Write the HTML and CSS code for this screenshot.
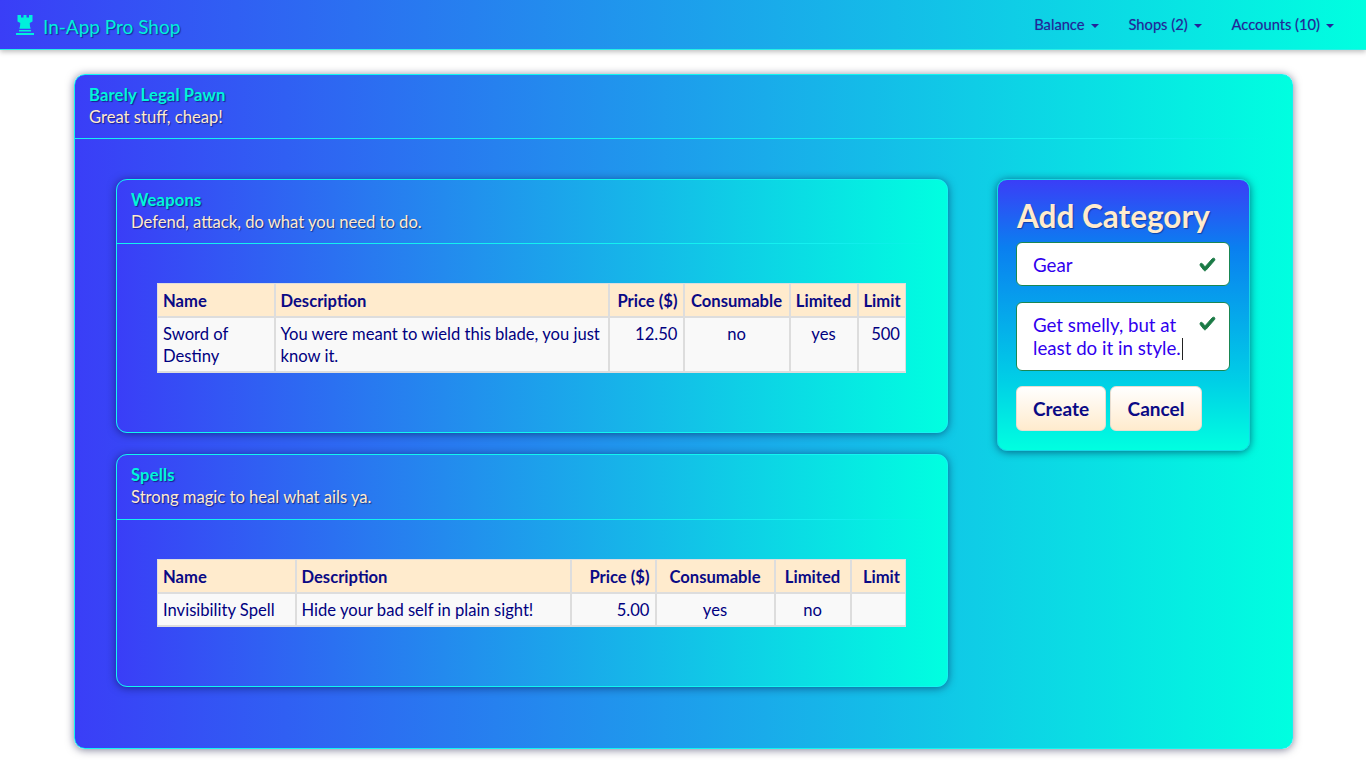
FILE: index.html
```html
<!DOCTYPE html>
<html lang="en">
<head>
<meta charset="utf-8">
<title>In-App Pro Shop</title>
<link rel="stylesheet" href="styles.css">
</head>
<body>
<nav class="navbar">
  <a class="brand" href="#">
    <svg class="rook" viewBox="0 0 18 20" aria-hidden="true"><path d="M1.500 0h3.500v2.500h2.500V0h3v2.500h2.500V0h3.500v6.500l-2.800 1.500c0 2 .3 4 1 5.800H3.300c.7-1.800 1-3.800 1-5.800L1.500 6.500z"/><path d="M3 15h12v1.500H3zM0 18h18v2H0z"/></svg>
    In-App Pro Shop
  </a>
  <ul class="nav-links">
    <li><a href="#" class="toggle">Balance</a></li>
    <li><a href="#" class="toggle">Shops (2)</a></li>
    <li><a href="#" class="toggle">Accounts (10)</a></li>
  </ul>
</nav>
<main class="page">
  <section class="card card-shop">
    <header class="card-head">
      <div class="card-title">Barely Legal Pawn</div>
      <div class="card-sub">Great stuff, cheap!</div>
    </header>
    <div class="shop-body">
      <div class="categories">
        <section class="card category">
          <header class="card-head">
            <div class="card-title">Weapons</div>
            <div class="card-sub">Defend, attack, do what you need to do.</div>
          </header>
          <div class="category-body">
            <table class="items items-a">
              <colgroup><col class="c1"><col class="c2"><col class="c3"><col class="c4"><col class="c5"><col class="c6"></colgroup>
              <thead><tr><th>Name</th><th>Description</th><th class="right">Price ($)</th><th class="center">Consumable</th><th class="center">Limited</th><th class="right">Limit</th></tr></thead>
              <tbody><tr><td>Sword of Destiny</td><td>You were meant to wield this blade, you just know it.</td><td class="right">12.50</td><td class="center">no</td><td class="center">yes</td><td class="right">500</td></tr></tbody>
            </table>
          </div>
        </section>
        <section class="card category">
          <header class="card-head">
            <div class="card-title">Spells</div>
            <div class="card-sub">Strong magic to heal what ails ya.</div>
          </header>
          <div class="category-body">
            <table class="items items-b">
              <colgroup><col class="c1"><col class="c2"><col class="c3"><col class="c4"><col class="c5"><col class="c6"></colgroup>
              <thead><tr><th>Name</th><th>Description</th><th class="right">Price ($)</th><th class="center">Consumable</th><th class="center">Limited</th><th class="right">Limit</th></tr></thead>
              <tbody><tr><td>Invisibility Spell</td><td>Hide your bad self in plain sight!</td><td class="right">5.00</td><td class="center">yes</td><td class="center">no</td><td class="right"></td></tr></tbody>
            </table>
          </div>
        </section>
      </div>
      <aside class="add-card">
        <h2 class="add-title">Add Category</h2>
        <div class="field field-input" role="textbox">Gear
          <svg class="check" viewBox="0 0 8 8" aria-hidden="true"><path d="M2.300 6.730L.6 4.530c-.4-1.040.46-1.400 1.100-.8l1.100 1.400 3.400-3.800c.6-.63 1.600-.27 1.200.7l-4 4.600c-.43.5-.8.4-1.100.1z"/></svg>
        </div>
        <div class="field field-area" role="textbox">Get smelly, but at<br>least do it in style.<span class="caret"></span>
          <svg class="check" viewBox="0 0 8 8" aria-hidden="true"><path d="M2.300 6.730L.6 4.530c-.4-1.040.46-1.400 1.100-.8l1.100 1.400 3.400-3.800c.6-.63 1.600-.27 1.200.7l-4 4.600c-.43.5-.8.4-1.100.1z"/></svg>
        </div>
        <div class="actions">
          <button class="btn btn-create">Create</button>
          <button class="btn btn-cancel">Cancel</button>
        </div>
      </aside>
    </div>
  </section>
</main>
</body>
</html>
```
FILE: styles.css
```css
* { box-sizing: border-box; }
html, body { margin: 0; height: 100%; }
body {
  background: #fff;
  font-family: "Lato", "Open Sans", sans-serif;
  font-size: 16.6px;
  line-height: 22px;
  color: #000080;
  overflow: hidden;
}
.navbar {
  height: 50px;
  display: flex;
  align-items: center;
  justify-content: space-between;
  padding: 0 32px 0 16px;
  background: linear-gradient(to right, #3a3ef7, #00ffe0);
  border-bottom: 1px solid #28f0e6;
  box-shadow: 0 2px 5px rgba(0, 0, 0, .25);
}
.brand {
  display: flex;
  align-items: center;
  gap: 9px;
  font-size: 19px;
  color: #00f0dc;
  text-decoration: none;
  text-shadow: 1px 1px 1px rgba(0, 0, 60, .5);
  padding-top: 4px;
}
.rook { width: 18px; height: 20px; fill: #00f0dc; margin-top: -3px; }
.nav-links {
  display: flex;
  gap: 30px;
  list-style: none;
  margin: 0 0 1px;
  padding: 0;
}
.toggle {
  font-size: 14.700px;
  color: #24249a;
  text-decoration: none;
  text-shadow: 0 0 1px rgba(0, 0, 100, .3);
}
.toggle::after {
  content: "";
  display: inline-block;
  margin-left: 6px;
  vertical-align: 2px;
  border-top: 4px solid currentColor;
  border-left: 4px solid transparent;
  border-right: 4px solid transparent;
}
.page { padding: 24px 73px 0 74px; }
.card {
  border: 1px solid #12f5f0;
  background: linear-gradient(to right, #3a3ef7, #00ffe0);
  border-radius: 11px;
  box-shadow: 0 1px 8px rgba(0, 0, 50, .5);
}
.card-head {
  height: 64px;
  padding: 9px 14px 0;
  border-bottom: 1px solid;
  border-image: linear-gradient(to right, #14f0f0, #14f0f0 85%, rgba(20, 240, 240, 0) 98%) 1;
}
.category + .category .card-head { height: 65px; }
.card-title {
  font-weight: 700;
  letter-spacing: .15px;
  color: #00f5dc;
  text-shadow: 1px 1px 1px rgba(0, 0, 60, .55);
}
.card-sub {
  color: #ffebcd;
  text-shadow: 1px 1px 1px rgba(0, 0, 60, .55);
}
.card-shop { height: 675px; }
.shop-body {
  display: flex;
  align-items: flex-start;
  gap: 49px;
  padding: 40px 41px 0 41px;
}
.categories {
  width: 832px;
  display: flex;
  flex-direction: column;
  gap: 21px;
}
.category { padding-bottom: 59px; }
.category-body { padding: 39px 41px 0 40px; }
.items {
  width: 748px;
  table-layout: fixed;
  border-collapse: collapse;
  background: #f9f9f9;
}
.items th, .items td {
  border: 2px solid #ddd;
  padding: 5px 5px 4px;
  text-align: left;
  vertical-align: top;
}
.items tr > :first-child { border-left: 1px solid #ddd; }
.items tr > :last-child { border-right: 1px solid #ddd; }
.items thead tr > * { border-top: 1px solid #ddd; }
.items th {
  background: #ffebcd;
  font-weight: 700;
  color: #0a0a85;
  padding: 6px 5px 4px;
}
.items .right { text-align: right; }
.items .center { text-align: center; }
.items-a .c1 { width: 117px; } .items-a .c2 { width: 334px; } .items-a .c3 { width: 75px; }
.items-a .c4 { width: 106px; } .items-a .c5 { width: 68px; } .items-a .c6 { width: 48px; }
.items-b .c1 { width: 138px; } .items-b .c2 { width: 275px; } .items-b .c3 { width: 85px; }
.items-b .c4 { width: 119px; } .items-b .c5 { width: 76px; } .items-b .c6 { width: 55px; }
.add-card {
  width: 253px;
  height: 272px;
  padding: 20px 18px;
  border: 1px solid #14d8e6;
  border-radius: 10px;
  background: linear-gradient(to bottom, #3a3ef7, #0a7ff0 25%, #00d0e6 75%, #00ffe0);
  box-shadow: 0 1px 8px rgba(0, 0, 50, .55);
}
.add-title {
  margin: 0 0 6px 1px;
  font-size: 31.5px;
  line-height: 33px;
  height: 36px;
  font-weight: 700;
  white-space: nowrap;
  color: #ffebcd;
  text-shadow: 1px 1px 1px rgba(0, 0, 60, .4);
}
.field {
  position: relative;
  width: 214px;
  padding: 11px 40px 9px 16px;
  background: #fff;
  border: 1px solid #198754;
  border-radius: 6px;
  color: #3000ee;
  font-size: 18.700px;
  line-height: 23px;
}
.field-input { height: 44px; margin-bottom: 16px; }
.field-area { height: 69px; padding-right: 16px; margin-bottom: 15px; }
.caret {
  display: inline-block;
  width: 1px;
  height: 22px;
  margin-left: 1px;
  vertical-align: -5px;
  background: #222;
}
.check {
  position: absolute;
  top: 13px;
  right: 13px;
  width: 17px;
  height: 17px;
  fill: #1a7a45;
  stroke: #1a7a45;
  stroke-width: .45;
}
.field-area .check { top: 12px; }
.actions { display: flex; gap: 4px; }
.btn {
  height: 45px;
  padding: 0 10px;
  font: 700 19px "Lato", sans-serif;
  color: #0a0a85;
  border: 1px solid #e8ddd0;
  border-radius: 6px;
  background: linear-gradient(to bottom, #fff, #ffebcd);
}
.btn-create { width: 90px; }
.btn-cancel { width: 92px; }
```
